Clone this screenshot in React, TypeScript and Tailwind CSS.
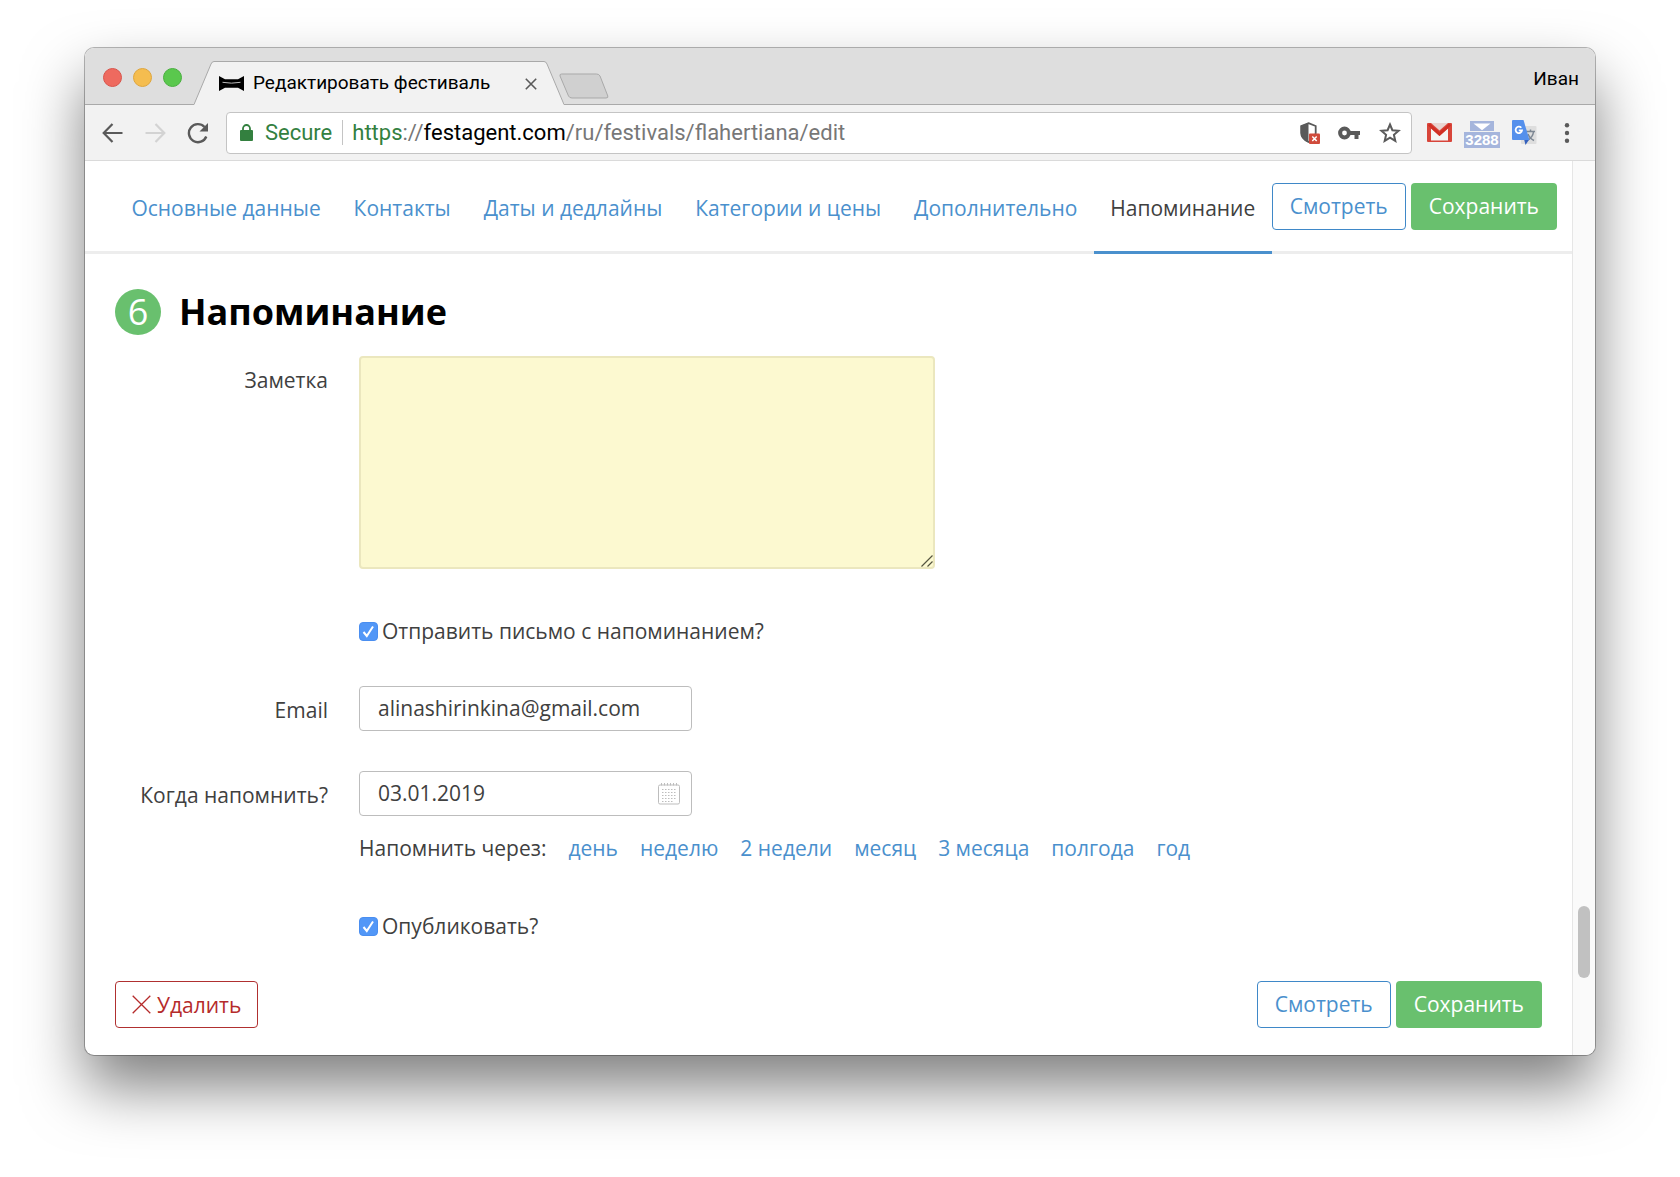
import { useState } from "react";

const sections = ["Основные данные", "Контакты", "Даты и дедлайны", "Категории и цены", "Дополнительно", "Напоминание"];
const periods = ["день", "неделю", "2 недели", "месяц", "3 месяца", "полгода", "год"];

function TabStrip() {
  return (
    <div className="flex h-[57px] items-end border-b border-[#a9a9a9] bg-[#dedede]">
      <div className="flex gap-[11px] self-start pt-5 pl-[18px]">
        <button aria-label="Закрыть окно" className="size-[19px] rounded-full border border-[#d9544b] bg-[#ee6a5f]" />
        <button aria-label="Свернуть окно" className="size-[19px] rounded-full border border-[#dfa63d] bg-[#f5bd4f]" />
        <button aria-label="Развернуть окно" className="size-[19px] rounded-full border border-[#49b03f] bg-[#5ac84d]" />
      </div>
      <div className="-mb-px ml-3 flex h-11 text-[#a9a9a9]">
        <svg width="20" height="44" viewBox="0 0 20 44" aria-hidden="true">
          <path d="M0 43.5 17 3Q18 .5 20 .5V44H0Z" fill="#f2f2f2" />
          <path d="M0 43.5 17 3Q18 .5 20 .5" fill="none" stroke="currentColor" />
        </svg>
        <div className="flex w-[330px] items-center border-t border-[#a9a9a9] bg-[#f2f2f2] pl-[5px]">
          <svg width="25" height="15" viewBox="0 0 25 15" aria-hidden="true">
            <path d="M0 0 6 3.300H19L25 0V15L19 11.700H6L0 15Z" fill="#000" />
            <path d="M3.500 6.300Q12.500 8 21.500 6.300" fill="none" stroke="#bbb" />
          </svg>
          <span className="ml-[9px] whitespace-nowrap text-[19px] text-black">Редактировать фестиваль</span>
          <button aria-label="Закрыть вкладку" className="mr-[7px] ml-auto">
            <svg width="12" height="12" viewBox="0 0 12 12" stroke="#5a5a5a" strokeWidth="1.6" aria-hidden="true">
              <path d="M.8.8 11.200 11.200M11.200.8.8 11.200" />
            </svg>
          </button>
        </div>
        <svg width="20" height="44" viewBox="0 0 20 44" aria-hidden="true">
          <path d="M20 43.500 3 3Q2 .5 0 .5V44H20Z" fill="#f2f2f2" />
          <path d="M20 43.500 3 3Q2 .5 0 .5" fill="none" stroke="currentColor" />
        </svg>
      </div>
      <button aria-label="Новая вкладка" className="mb-[5px] -ml-[5px]">
        <svg width="50" height="26" viewBox="0 0 50 26" aria-hidden="true">
          <path d="M2.500 1H37.500Q40 1 41 3L48.800 23Q49.500 25 47 25H13Q10.500 25 9.500 23L1 3Q.5 1 2.500 1Z" fill="#d0d0d0" stroke="#a9a9a9" />
        </svg>
      </button>
      <span className="mr-4 mb-[11px] ml-auto text-[19px] text-black">Иван</span>
    </div>
  );
}

function Toolbar() {
  return (
    <div className="flex h-14 items-center border-b border-[#dadada] bg-[#f2f2f2] pr-[23px] pl-[17px]">
      <button aria-label="Назад">
        <svg width="21" height="20" viewBox="0 0 21 20" fill="none" stroke="#5a5a5a" strokeWidth="2.200" aria-hidden="true">
          <path d="M20.500 10H2M10.500 1 1.700 10l8.800 9" />
        </svg>
      </button>
      <button aria-label="Вперёд" className="ml-[22px]">
        <svg width="21" height="20" viewBox="0 0 21 20" fill="none" stroke="#d3d3d3" strokeWidth="2.200" aria-hidden="true">
          <path d="M.5 10H19M10.500 1l8.800 9-8.800 9" />
        </svg>
      </button>
      <button aria-label="Обновить" className="ml-[21px]">
        <svg width="22" height="22" viewBox="0 0 22 22" aria-hidden="true">
          <path d="M19.300 14.500A9 9 0 1 1 17.500 5" fill="none" stroke="#5a5a5a" strokeWidth="2.400" />
          <path d="M21 1v8.500h-8.500Z" fill="#5a5a5a" />
        </svg>
      </button>
      <div className="ml-[17px] flex h-[42px] min-w-0 flex-1 items-center rounded border border-[#c4c4c4] bg-white pr-2.5 pl-[13px] text-[22px]">
        <svg className="shrink-0" width="13" height="17" viewBox="0 0 13 17" aria-hidden="true">
          <rect y="6" width="13" height="11" rx="1" fill="#33803f" />
          <path d="M3 7V4.500a3.500 3.500 0 0 1 7 0V7" fill="none" stroke="#33803f" strokeWidth="1.800" />
        </svg>
        <span className="ml-3 text-[#33803f]">Secure</span>
        <span className="mr-[9px] ml-[10px] h-[25px] w-px bg-[#c4c4c4]" />
        <span className="min-w-0 flex-1 truncate text-[#777]">
          <span className="text-[#33803f]">https</span>://<span className="text-black">festagent.com</span>/ru/festivals/flahertiana/edit
        </span>
        <svg className="mr-[18px] shrink-0" width="20" height="22" viewBox="0 0 20 22" aria-hidden="true">
          <path d="M8.500 1.200 15.700 4v7c0 4-3 7-7.200 9C4.300 18 1.200 15 1.200 11V4Z" fill="#fff" stroke="#5a5a5a" strokeWidth="1.800" />
          <path d="M8.500 1v19.500C4 18.500.8 15 .8 11V3.800Z" fill="#5a5a5a" />
          <rect x="9" y="11.500" width="11" height="10.500" rx="1" fill="#d04b3c" />
          <path d="m12.300 14.500 4.400 4.500m0-4.500-4.400 4.500" stroke="#fff" strokeWidth="1.500" />
        </svg>
        <svg className="mr-[19px] shrink-0" width="22" height="14" viewBox="0 0 22 14" aria-hidden="true">
          <circle cx="6.500" cy="7" r="4.400" fill="none" stroke="#5a5a5a" strokeWidth="4" />
          <path d="M11 5h11v4h-1.500v4h-4V9H11Z" fill="#5a5a5a" />
        </svg>
        <svg className="shrink-0" width="22" height="21" viewBox="0 0 22 21" fill="none" stroke="#5a5a5a" strokeWidth="2" aria-hidden="true">
          <path d="m11 2.500 2.400 5.700 6.200.5-4.700 4.100 1.400 6.100L11 15.600l-5.300 3.300 1.400-6.100L2.400 8.700l6.200-.5Z" />
        </svg>
      </div>
      <button aria-label="Gmail" className="ml-[15px]">
        <svg width="25" height="19" viewBox="0 0 25 19" aria-hidden="true">
          <rect width="25" height="19" rx="1" fill="#d8453a" />
          <path d="M4 0h17l-8.500 7.500Z" fill="#e9d4d1" />
          <path d="M4 5.500 12.500 13 21 5.500V17.500H4Z" fill="#f4f4f4" />
          <path d="M2 1.500 12.500 11 23 1.500" fill="none" stroke="#d12f25" strokeWidth="3" />
        </svg>
      </button>
      <button aria-label="Почта: 3288" className="mt-1 ml-3 flex w-9 flex-col items-center gap-px">
        <svg width="24" height="10" viewBox="0 0 24 10" aria-hidden="true">
          <path d="M0 0h24v10H0Z" fill="#a5b5dc" />
          <path d="M3.500 2.500h17L12 9.200Z" fill="#fff" />
        </svg>
        <span className="w-full bg-[#a5b5dc] text-center font-['Liberation_Sans',sans-serif] text-[15px] leading-4 font-bold text-white">3288</span>
      </button>
      <button aria-label="Переводчик" className="ml-3">
        <svg width="25" height="26" viewBox="0 0 25 26" aria-hidden="true">
          <rect x="9" y="6" width="15.500" height="18" rx="1" fill="#dedede" />
          <path d="M14 11.500h9M18.500 9.500v2M21.500 12c-.5 3.500-3 6.500-5.500 8M16 14c1 3 3 5 6 6.500" fill="none" stroke="#7d8793" strokeWidth="1.500" />
          <path d="m12 19 5.500 0-4 6Z" fill="#3461bd" />
          <path d="M1 0h10.500L17.500 20H1q-1 0-1-1V1Q0 0 1 0Z" fill="#5590ec" />
          <path d="M9.300 7.800A3.200 3.200 0 1 0 10 10.300H6.800" fill="none" stroke="#fff" strokeWidth="1.800" />
        </svg>
      </button>
      <button aria-label="Меню" className="ml-[25px]">
        <svg width="10" height="20" viewBox="0 0 10 20" fill="#5a5a5a" aria-hidden="true">
          <circle cx="5" cy="2.300" r="2.200" />
          <circle cx="5" cy="10" r="2.200" />
          <circle cx="5" cy="17.700" r="2.200" />
        </svg>
      </button>
    </div>
  );
}

function Actions() {
  return (
    <div className="flex shrink-0 gap-[5px]">
      <button className="h-[47px] rounded border border-[#3f88c8] bg-white px-[17px] pb-0.5 text-[#4a90cd]">Смотреть</button>
      <button className="h-[47px] rounded bg-[#69c06e] px-[18px] pb-0.5 text-white">Сохранить</button>
    </div>
  );
}

function Check({ id, label }: { id: string; label: string }) {
  const [on, setOn] = useState(true);
  return (
    <div className="flex items-center gap-1">
      <span className="grid size-[19px] place-items-center">
        <input
          id={id}
          type="checkbox"
          checked={on}
          onChange={() => setOn(!on)}
          className="col-start-1 row-start-1 size-[19px] appearance-none rounded border border-[#b5b5b5] bg-white checked:border-[#4a8ef0] checked:bg-[#5297f7]"
        />
        {on && (
          <svg className="pointer-events-none col-start-1 row-start-1" width="13" height="13" viewBox="0 0 13 13" fill="none" stroke="#fff" strokeWidth="2" aria-hidden="true">
            <path d="m1.500 7 3.300 4L11 1.500" />
          </svg>
        )}
      </span>
      <label htmlFor={id}>{label}</label>
    </div>
  );
}

function CalendarIcon() {
  return (
    <svg width="22" height="22" viewBox="0 0 22 22" fill="none" stroke="#bdbdbd" aria-hidden="true">
      <rect x=".5" y="2" width="21" height="19" rx="1.500" />
      <path d="M3 1h17" strokeWidth="3" strokeDasharray="1 2" />
      <path d="M4 6.500h15M4 9.500h15M4 12.500h15M4 15.500h15M4 18.500h12" strokeDasharray="1.500 1.500" />
    </svg>
  );
}

const field = "h-[45px] w-full rounded border border-[#bdbdbd] bg-white px-[18px] pb-0.5 text-[#404040]";

export default function App() {
  return (
    <div className="min-h-screen overflow-hidden bg-white px-[85px] pt-12 pb-[120px] font-['Roboto','Liberation_Sans',sans-serif]">
      <div className="overflow-hidden rounded-[9px] bg-white shadow-[0_0_0_1px_rgba(0,0,0,0.28),0_32px_60px_rgba(0,0,0,0.5)]">
        <TabStrip />
        <Toolbar />
        <div className="flex font-['Open_Sans','Noto_Sans',sans-serif] text-[21px] leading-[30px] text-[#404040]">
          <main className="min-w-0 flex-1">
            <header className="flex h-[93px] border-b-[3px] border-[#ededed] pr-[15px] pl-[30px]">
              <nav className="flex h-[93px] flex-1 whitespace-nowrap">
                {sections.map((s) => (
                  <a
                    key={s}
                    href="#reminder"
                    className={
                      s === "Напоминание"
                        ? "flex-auto border-b-[3px] border-[#4a90cd] px-[15px] pt-8 text-center"
                        : "flex-auto px-[15px] pt-8 text-center text-[#4a90cd]"
                    }
                  >
                    {s}
                  </a>
                ))}
              </nav>
              <div className="pt-[22px]">
                <Actions />
              </div>
            </header>
            <form id="reminder" className="px-[30px] pt-[35px] pb-[27px]" onSubmit={(e) => e.preventDefault()}>
              <h2 className="flex items-center gap-[18px] text-4xl leading-[46px] font-bold text-black">
                <span className="flex size-[46px] items-center justify-center rounded-full bg-[#69c06e] font-medium text-white">6</span>
                Напоминание
              </h2>
              <div className="mt-[21px] grid grid-cols-[213px_1fr] gap-x-[31px]">
                <label htmlFor="note" className="pt-[9px] text-right">Заметка</label>
                <div className="relative w-[576px]">
                  <textarea id="note" className="block h-[213px] w-full resize-none rounded border-2 border-[#ebe7be] bg-[#fcf9d0] p-3" />
                  <svg className="pointer-events-none absolute right-0.5 bottom-0.5" width="12" height="12" viewBox="0 0 12 12" stroke="#55553f" strokeWidth="1.200" aria-hidden="true">
                    <path d="M.5 11.500 11.500.5M6.500 11.500 11.500 6.500" />
                  </svg>
                </div>
                <div className="col-start-2 mt-[47px]">
                  <Check id="send" label="Отправить письмо с напоминанием?" />
                </div>
                <label htmlFor="email" className="mt-10 pt-[9px] text-right">Email</label>
                <div className="mt-10 w-[333px]">
                  <input id="email" type="email" defaultValue="alinashirinkina@gmail.com" className={field} />
                </div>
                <label htmlFor="date" className="mt-10 pt-[9px] text-right">Когда напомнить?</label>
                <div className="relative mt-10 w-[333px]">
                  <input id="date" type="text" defaultValue="03.01.2019" className={field} />
                  <span className="absolute top-3 right-3">
                    <CalendarIcon />
                  </span>
                </div>
                <div className="col-start-2 mt-[17px] flex gap-[22px]">
                  <span>Напомнить через:</span>
                  {periods.map((p) => (
                    <a key={p} href="#date" className="text-[#4a90cd]">{p}</a>
                  ))}
                </div>
                <div className="col-start-2 mt-12">
                  <Check id="publish" label="Опубликовать?" />
                </div>
              </div>
              <div className="mt-10 flex justify-between">
                <button className="flex h-[47px] items-center gap-1.5 rounded border border-[#b03030] bg-white px-4 text-[#b52b2b]">
                  <svg width="19" height="19" viewBox="0 0 19 19" stroke="#b52b2b" strokeWidth="1.300" aria-hidden="true">
                    <path d="m.7.7 17.600 17.600M18.300.7.7 18.300" />
                  </svg>
                  Удалить
                </button>
                <Actions />
              </div>
            </form>
          </main>
          <div className="flex w-[23px] flex-col items-center justify-end border-l border-[#e6e6e6] bg-[#fafafa] pb-[77px]">
            <div className="h-[72px] w-3 rounded-full bg-[#c1c1c1]" />
          </div>
        </div>
      </div>
    </div>
  );
}
